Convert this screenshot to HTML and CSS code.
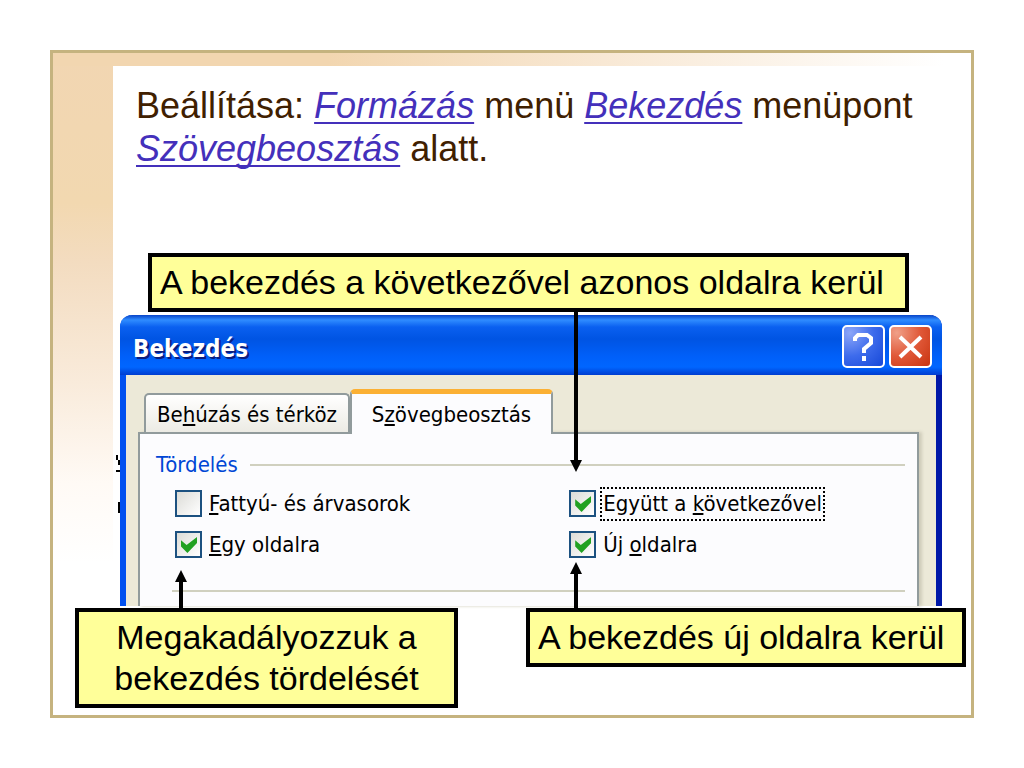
FILE: index.html
```html
<!DOCTYPE html>
<html lang="hu">
<head>
    <meta charset="UTF-8">
    <meta name="viewport" content="width=device-width, initial-scale=1.0">
    <title>Bekezdés</title>
    <link rel="stylesheet" href="styles.css">
</head>
<body>

<main class="slide">
    <div class="panel">
        <p class="intro">Beállítása: <em>Formázás</em> menü <em>Bekezdés</em> menüpont <em>Szövegbeosztás</em> alatt.</p>

        <div class="callout callout-next">
            A bekezdés a következővel azonos oldalra kerül
            <svg class="arrow arrow-down" width="12" height="164" viewBox="0 0 12 164"><path d="M4 0h4v152h4l-6 12-6-12h4z"/></svg>
        </div>

        <section class="dialog">
            <!-- szövegmaradvány az ablak mögött -->
            <svg class="remains" width="5" height="60" viewBox="0 0 5 60" shape-rendering="crispEdges"><path d="M1 0h2v5h-2zM3 5h2v5h-2zM1 15h4v2h-4zM3 47h2v11h-2z"/></svg>

            <header class="titlebar">
                <h1>Bekezdés</h1>
                <button type="button" class="help" aria-label="Súgó">
                    <svg width="39" height="39" viewBox="0 0 39 39"><path d="M11 14v-3l3-3h9l4 3v5l-7 6v4M20 29v5" fill="none" stroke="#fff" stroke-width="4"/></svg>
                </button>
                <button type="button" class="close" aria-label="Bezárás">
                    <svg width="39" height="39" viewBox="0 0 39 39"><path d="M9 10l21 20M30 10L9 30" fill="none" stroke="#fff" stroke-width="4"/></svg>
                </button>
            </header>

            <div class="tabs" role="tablist">
                <button type="button" role="tab" class="tab">Be<u>h</u>úzás és térköz</button>
                <button type="button" role="tab" class="tab active" aria-selected="true">S<u>z</u>övegbeosztás</button>
            </div>

            <div class="page" role="tabpanel">
                <h2>Tördelés</h2>
                <form class="options">
                    <div class="option">
                        <input type="checkbox" id="fattyu">
                        <label for="fattyu"><u>F</u>attyú- és árvasorok</label>
                    </div>
                    <div class="option">
                        <input type="checkbox" id="egyutt" checked>
                        <label for="egyutt" class="focused">Együtt a <u>k</u>övetkezővel</label>
                    </div>
                    <div class="option">
                        <input type="checkbox" id="egyoldal" checked>
                        <label for="egyoldal"><u>E</u>gy oldalra</label>
                    </div>
                    <div class="option">
                        <input type="checkbox" id="ujoldal" checked>
                        <label for="ujoldal">Új <u>o</u>ldalra</label>
                    </div>
                </form>
                <hr>
            </div>
        </section>
    </div>

    <div class="notes">
        <div class="callout callout-keep">
            Megakadályozzuk a bekezdés tördelését
            <svg class="arrow arrow-keep" width="12" height="42" viewBox="0 0 12 42"><path d="M4 42V12H0L6 0l6 12H8v30z"/></svg>
        </div>
        <div class="callout callout-new">
            A bekezdés új oldalra kerül
            <svg class="arrow arrow-new" width="12" height="50" viewBox="0 0 12 50"><path d="M4 50V12H0L6 0l6 12H8v38z"/></svg>
        </div>
    </div>
</main>

</body>
</html>
```

FILE: styles.css
```css
* { box-sizing: border-box; }
body { margin: 0; padding: 50px; background: #fff; font-family: "Liberation Sans", Arial, sans-serif; color: #000; }

.slide {
    border: 3px solid #c5b37f; padding: 13px 5px 7px 22px;
    background:
        linear-gradient(to right, #f2d6b0 30%, #f8e8d4 60%, #fff 97%) 0 0 / 100% 13px no-repeat,
        linear-gradient(#f2d6b2, #f2d8b0 150px, #f3dcc0 210px, #f9ebdb 330px, #fffaf5 430px, #fff 510px) 0 0 / 60px 100% no-repeat;
}
.panel { margin-left: 38px; padding: 18px 24px 0 7px; background: #fff; }
.intro { margin: 0 16px 83px; font-size: 36px; line-height: 43px; color: #402000; }
.intro em { color: #4430bb; text-decoration: underline; text-decoration-thickness: 2px; text-underline-offset: 4px; text-decoration-skip-ink: none; }

/* sárga magyarázó dobozok */
.callout { position: relative; border: 4px solid #000; padding: 5px 8px; background: #ff9; font-size: 34px; line-height: 41px; }
.callout-next { margin: 0 33px 3px 28px; }
.arrow { position: absolute; z-index: 2; }
.arrow-down { left: 418px; top: 100%; }
.arrow-keep { left: 96px; bottom: 100%; }
.arrow-new { left: 40px; bottom: 100%; }

.notes { display: flex; justify-content: space-between; align-items: flex-start; margin-top: 2px; }
.callout-keep { width: 383px; padding: 5px 28px; text-align: center; }
.callout-new { width: 440px; }

/* XP ablak */
.dialog {
    position: relative; border: solid #0050f0; border-width: 0 6px; border-right-color: #0018a8;
    border-radius: 12px 12px 0 0; background: #ece9d8;
    font-family: "DejaVu Sans Condensed", "DejaVu Sans", sans-serif; font-size: 22px;
}
.remains { position: absolute; left: -11px; top: 140px; }
.titlebar {
    display: flex; align-items: center; gap: 4px; height: 60px; margin: 0 -6px; padding: 4px 10px 2px 13px;
    border-radius: 12px 12px 0 0;
    background: linear-gradient(#0844c8, #2f8cff 5px, #0a60f0 12px, #0054e3 24px, #0060fa 42px, #0066ff 52px, #003dd0 60px);
}
.titlebar h1 { flex: 1; margin: 0; padding-top: 5px; font-size: 24px; color: #fff; text-shadow: 2px 2px 0 #0a1e80; }
.titlebar button { width: 43px; height: 43px; padding: 0; border: 2px solid #fff; border-radius: 5px; }
.titlebar svg { display: block; }
.help { background: radial-gradient(circle at 15% 15%, #8ca6f8, #3d6bec 50%, #1648d8); }
.close { background: radial-gradient(circle at 15% 15%, #f0a088, #e05838 50%, #c83410); }

.tabs { display: flex; align-items: flex-end; height: 57px; padding-left: 18px; }
.tab {
    height: 39px; width: 206px; padding: 2px 0 0; border: 2px solid #919b9c; border-bottom: 0; border-radius: 5px 5px 0 0;
    background: linear-gradient(#fff, #ecebe4); font: inherit; white-space: nowrap;
}
.tab.active { z-index: 1; width: 203px; height: 45px; margin-bottom: -2px; padding: 0; border-top: 5px solid #fbb034; background: #fcfcfe; }

.page { margin: 0 17px 0 12px; padding: 18px 12px 14px 16px; border: 2px solid #919b9c; border-bottom: 0; background: #fcfcfe; box-shadow: 3px 0 3px #cfccba; }
.page h2 { display: flex; align-items: center; gap: 12px; margin: 0 0 5px; font-size: 22px; font-weight: normal; line-height: 26px; color: #0046d5; }
.page h2::after { content: ""; flex: 1; height: 2px; background: #d0d0bf; }
.options { display: grid; grid-template-columns: 54% 1fr; padding-left: 19px; }
.option { display: flex; align-items: center; gap: 4px; height: 41px; }
.option input { appearance: none; width: 27px; height: 27px; margin: 0; border: 2px solid #1c5180; background: linear-gradient(135deg, #dcdcd7, #fff); }
.option input:checked::before { content: ""; display: block; width: 16px; height: 16px; margin: 4px; background: #21a121; clip-path: polygon(0 20%, 35% 50%, 100% 0, 100% 38%, 40% 100%, 0 60%); }
.option label { padding: 2px; line-height: 28px; border: 1px dotted transparent; white-space: nowrap; }
.option .focused { border: 2px dotted #000; padding: 1px; }
.page hr { height: 2px; margin: 25px 0 0 16px; border: 0; background: #d0d0bf; }
```
